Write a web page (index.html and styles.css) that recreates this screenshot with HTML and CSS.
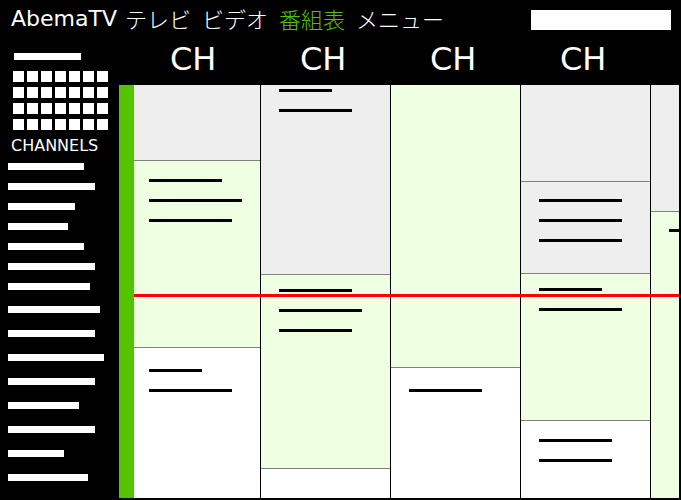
FILE: index.html
```html
<!DOCTYPE html>
<html lang="ja">
<head>
<meta charset="utf-8">
<title>AbemaTV 番組表</title>
<link rel="stylesheet" href="styles.css">
</head>
<body>
<header class="topbar">
  <a class="brand" href="#">AbemaTV</a>
  <nav class="nav">
    <a href="#">テレビ</a>
    <a href="#">ビデオ</a>
    <a class="current" href="#">番組表</a>
    <a href="#">メニュー</a>
  </nav>
  <input class="search" type="search" aria-label="検索">
</header>
<div class="layout">
  <aside class="sidebar">
    <div class="month"></div>
    <div class="calendar">
      <i></i><i></i><i></i><i></i><i></i><i></i><i></i>
      <i></i><i></i><i></i><i></i><i></i><i></i><i></i>
      <i></i><i></i><i></i><i></i><i></i><i></i><i></i>
      <i></i><i></i><i></i><i></i><i></i><i></i><i></i>
    </div>
    <h2 class="side-title">CHANNELS</h2>
    <div class="channels">
      <span style="width:76px"></span>
      <span style="width:87px"></span>
      <span style="width:67px"></span>
      <span style="width:60px"></span>
      <span style="width:76px"></span>
      <span style="width:87px"></span>
      <span style="width:82px"></span>
    </div>
    <div class="channels spaced">
      <span style="width:92px"></span>
      <span style="width:87px"></span>
      <span style="width:96px"></span>
      <span style="width:87px"></span>
      <span style="width:71px"></span>
      <span style="width:87px"></span>
      <span style="width:56px"></span>
      <span style="width:80px"></span>
    </div>
  </aside>
  <main class="guide">
    <div class="heads">
      <h3>CH</h3>
      <h3>CH</h3>
      <h3>CH</h3>
      <h3>CH</h3>
    </div>
    <div class="board">
      <div class="hours"></div>
      <div class="schedule">
        <section class="column first">
          <div class="program past" style="height:76px"></div>
          <div class="program live" style="height:187px">
            <span style="width:73px"></span>
            <span style="width:93px"></span>
            <span style="width:83px"></span>
          </div>
          <div class="program lead-large">
            <span style="width:53px"></span>
            <span style="width:83px"></span>
          </div>
        </section>
        <section class="column">
          <div class="program past lead-cut" style="height:190px">
            <span style="width:53px"></span>
            <span style="width:73px"></span>
          </div>
          <div class="program live lead-small" style="height:194px">
            <span style="width:73px"></span>
            <span style="width:83px"></span>
            <span style="width:73px"></span>
          </div>
          <div class="program"></div>
        </section>
        <section class="column">
          <div class="program live" style="height:283px"></div>
          <div class="program lead-large">
            <span style="width:73px"></span>
          </div>
        </section>
        <section class="column">
          <div class="program past" style="height:97px"></div>
          <div class="program past lead-medium" style="height:92px">
            <span style="width:83px"></span>
            <span style="width:83px"></span>
            <span style="width:83px"></span>
          </div>
          <div class="program live lead-small" style="height:147px">
            <span style="width:63px"></span>
            <span style="width:83px"></span>
          </div>
          <div class="program">
            <span style="width:73px"></span>
            <span style="width:73px"></span>
          </div>
        </section>
        <section class="column">
          <div class="program past" style="height:127px"></div>
          <div class="program live lead-medium">
            <span style="width:73px"></span>
          </div>
        </section>
        <div class="now"></div>
      </div>
    </div>
  </main>
</div>
</body>
</html>
```
FILE: styles.css
```css
:root {
  --green: #54c300;
}

* {
  box-sizing: border-box;
}

body {
  margin: 0;
  min-height: 100vh;
  display: flex;
  flex-direction: column;
  background: #000;
  color: #fff;
  font-family: "DejaVu Sans", "Noto Sans CJK JP", sans-serif;
  overflow: hidden;
}

a {
  color: inherit;
  text-decoration: none;
}

h2,
h3 {
  margin: 0;
  font-weight: 400;
}

.topbar {
  display: flex;
  height: 40px;
  padding: 0 10px 0 11px;
  font-size: 22px;
  white-space: nowrap;
}

.brand {
  line-height: 38px;
}

.nav {
  display: flex;
  gap: 11px;
  margin-left: 8px;
  font-family: "Noto Sans CJK JP", sans-serif;
  font-weight: 300;
  line-height: 36px;
}

.current {
  color: var(--green);
}

.search {
  width: 140px;
  height: 20px;
  margin: 10px 0 0 auto;
  padding: 0 4px;
  border: 0;
  border-radius: 0;
  background: #fff;
  appearance: none;
}

.layout {
  flex: 1;
  display: flex;
}

.sidebar {
  flex: none;
  width: 119px;
  padding: 13px 8px 0;
}

.month {
  width: 67px;
  height: 7px;
  margin-left: 6px;
  background: #fff;
}

.calendar {
  display: grid;
  grid-template-columns: repeat(7, 11px);
  grid-auto-rows: 11px;
  gap: 5px 3px;
  margin: 11px 0 0 5px;
}

.calendar i {
  background: #fff;
}

.side-title {
  margin: 6px 0 7px 3px;
  font-size: 16px;
  line-height: 20px;
}

.channels {
  display: flex;
  flex-direction: column;
  gap: 13px;
}

.channels span {
  height: 7px;
  background: #fff;
}

.channels.spaced {
  gap: 17px;
  margin-top: 16px;
}

.guide {
  flex: 1;
  min-width: 0;
  display: flex;
  flex-direction: column;
  margin: 0 2px 2px 0;
  overflow: hidden;
}

.heads {
  display: flex;
  height: 45px;
  padding-left: 51px;
}

.heads h3 {
  flex: none;
  width: 130px;
  font-size: 32px;
  line-height: 38px;
}

.board {
  flex: 1;
  display: flex;
}

.hours {
  flex: none;
  width: 15px;
  background: var(--green);
}

.schedule {
  position: relative;
  flex: 1;
  min-width: 0;
  display: flex;
  overflow: hidden;
}

.column {
  flex: none;
  display: flex;
  flex-direction: column;
  width: 130px;
  border-right: 1px solid #000;
}

.column.first {
  width: 127px;
}

.program {
  flex: none;
  display: flex;
  flex-direction: column;
  gap: 17px;
  padding: 18px 0 0 18px;
  border-bottom: 1px solid #808080;
  background: #fff;
  overflow: hidden;
}

.first .program {
  padding-left: 15px;
}

.program:last-child {
  flex: 1;
  border-bottom: 0;
}

.program.past {
  background: #eee;
}

.program.live {
  background: #eeffe2;
}

.program.lead-cut {
  padding-top: 4px;
}

.program.lead-small {
  padding-top: 14px;
}

.program.lead-medium {
  padding-top: 17px;
}

.program.lead-large {
  padding-top: 21px;
}

.program span {
  flex: none;
  height: 3px;
  background: #000;
}

/* Current time, drawn across every channel */
.now {
  position: absolute;
  top: 209px;
  left: 0;
  right: 0;
  height: 3px;
  background: #f00;
}
```
